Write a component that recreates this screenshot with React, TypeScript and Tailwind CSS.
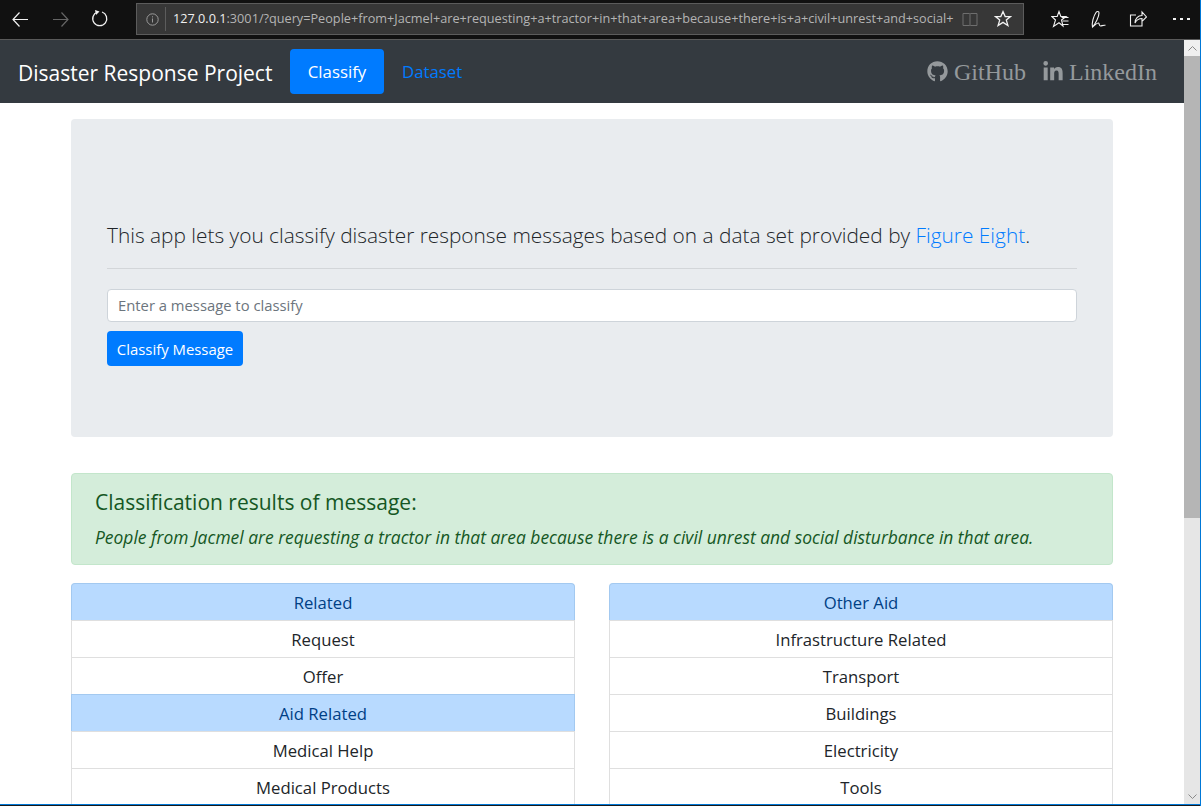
import React from "react";
import { FaGithub, FaLinkedinIn } from "react-icons/fa";

const sans = "font-['Open_Sans','Noto_Sans',sans-serif]";

function Toolbar() {
  return (
    <div className="flex h-[40px] shrink-0 items-center border-b border-[#5a5a5a] bg-[#111111] pb-[1px]">
      <div className="flex h-full w-[136px] shrink-0 items-center">
        <svg width="120" height="24" viewBox="0 0 120 24" className="ml-[10px]" fill="none" strokeWidth="1.2">
          <path d="M3 12.500h15M9.500 5.500 3 12.500l6.500 7" stroke="#f2f2f2" />
          <path d="M43 12.500h15M51.500 5.500 58 12.500l-6.500 7" stroke="#666666" />
          <path d="M92 5a7 7 0 1 1-4.500 0" stroke="#f2f2f2" strokeWidth="1.300" />
          <path d="M85 3 89.500 4.500 86 8z" fill="#f2f2f2" />
        </svg>
      </div>
      <div className="flex h-[32px] w-[888px] shrink-0 items-center overflow-hidden border border-[#5c5c5c] bg-[#373737]">
        <svg width="15" height="15" viewBox="0 0 15 15" fill="none" className="ml-[8px] shrink-0">
          <circle cx="7.500" cy="7.500" r="5.700" stroke="#9a9a9a" />
          <path d="M7.500 6.500v4M7.500 4.300v1.100" stroke="#9a9a9a" />
        </svg>
        <div className="ml-[5px] h-[24px] w-px shrink-0 bg-[#5c5c5c]" />
        <div className={`${sans} ml-[7px] w-[784px] shrink-0 whitespace-nowrap text-[12.7px] text-[#b4b4b4]`}>
          <span className="text-[#f0f0f0]">127.0.0.1</span>:3001/?query=People+from+Jacmel+are+requesting+a+tractor+in+that+area+because+there+is+a+civil+unrest+and+social+
        </div>
        <svg width="16" height="15" viewBox="0 0 16 15" fill="none" className="ml-[5px] shrink-0">
          <path d="M1 1.500h6.500l.5.700.5-.700H15v12H8.500l-.5.500-.5-.500H1zM8 2.200V13.500" stroke="#6e6e6e" />
        </svg>
        <svg width="18" height="18" viewBox="0 0 18 18" fill="none" className="ml-[16px] shrink-0">
          <path d="m9 1.600 2.200 5h5.300l-4.200 3.500 1.600 5.500L9 12.400l-4.900 3.200 1.600-5.500L1.500 6.600h5.300z" stroke="#f2f2f2" strokeWidth="1.300" />
        </svg>
      </div>
      <div className="ml-[27px] flex items-center">
        <svg width="18" height="18" viewBox="0 0 18 18" fill="none">
          <path d="M8 1.500 9.800 6.500H15L10.500 10l1.500 6-4-3.200L2.500 16.500 4.500 10 .8 6.500h5.400z" stroke="#f2f2f2" strokeWidth="1.100" />
          <path d="M10.500 7.500h7M11.500 11h6M12 14.500h5.500" stroke="#f2f2f2" strokeWidth="1.100" />
        </svg>
        <svg width="18" height="20" viewBox="0 0 18 20" fill="none" className="ml-[21px]">
          <path d="M2.500 18c-1-3.500 1-11 3.500-14.500 1-1.400 3-1.300 3 .5C9 8 5.500 14.500 2.500 18zM2.500 18c2.500-2 4.500-4.500 6-4 1 .5.500 3 2 3s2.500-1.200 5-.7" stroke="#f2f2f2" strokeWidth="1.100" />
        </svg>
        <svg width="18" height="18" viewBox="0 0 18 18" fill="none" className="ml-[21px]">
          <path d="M7 5H1.500v11H13v-4M6 13c0-4.500 3-7.500 7-7.500V2l4.500 5-4.500 4.500V8.500c-3 0-5.500 1.500-7 4.500z" stroke="#f2f2f2" strokeWidth="1.100" />
        </svg>
        <div className="ml-[26px] flex gap-[4px]">
          <span className="h-[2px] w-[3px] bg-[#f2f2f2]" />
          <span className="h-[2px] w-[3px] bg-[#f2f2f2]" />
          <span className="h-[2px] w-[3px] bg-[#f2f2f2]" />
        </div>
      </div>
    </div>
  );
}

function Navbar() {
  return (
    <nav className="flex h-[63px] shrink-0 items-center bg-[#343a40] pl-[18px] pr-[27px]">
      <span className="w-[272px] shrink-0 pt-[4px] text-[21px] text-white">Disaster Response Project</span>
      <a className="flex h-[45px] w-[94px] items-center justify-center rounded-[4px] bg-[#007bff] text-[16.8px] text-white">Classify</a>
      <a className="ml-[18px] pt-[1px] text-[16.800px] text-[#007bff]">Dataset</a>
      <div className="ml-auto flex items-center font-['Liberation_Serif',serif] text-[24px] text-[#95999c]">
        <FaGithub className="mr-[6px] h-[21px] w-[21px]" />
        <span>GitHub</span>
        <FaLinkedinIn className="ml-[16px] mr-[5px] h-[22px] w-[22px]" />
        <span>LinkedIn</span>
      </div>
    </nav>
  );
}

function Hero() {
  return (
    <section className="flex h-[318px] flex-col rounded-[4px] bg-[#e9ecef] px-[36px] pt-[101px]">
      <p className="text-[20.85px] leading-[31px] font-light text-[#212529]">
        This app lets you classify disaster response messages based on a data set provided by <a className="text-[#007bff]">Figure Eight</a>.
      </p>
      <hr className="mt-[17px] border-[#d3d6d9]" />
      <div className="mt-[20px] flex h-[33px] items-center rounded-[4px] border border-[#ced4da] bg-white px-[10px] text-[14.8px] text-[#6c757d]">
        Enter a message to classify
      </div>
      <button className="mt-[9px] flex h-[35px] w-[136px] items-center justify-center rounded-[4px] bg-[#007bff] pt-[1px] text-[14.9px] text-white">Classify Message</button>
    </section>
  );
}

function Group({ items }: { items: [string, boolean][] }) {
  return (
    <div className="flex h-[300px] flex-col">
      {items.map(([label, head], i) => (
        <div
          key={label}
          className={`flex h-[37px] shrink-0 items-center justify-center border-x border-t pt-[1px] text-[16.7px] ${
            head ? "border-[#a3c9f0] bg-[#b8daff] text-[#004085]" : "border-[#dfdfdf] bg-white text-[#212529]"
          } ${i === 0 ? "rounded-t-[4px]" : ""}`}
        >
          {label}
        </div>
      ))}
    </div>
  );
}

export default function App() {
  return (
    <div className={`${sans} flex h-[806px] w-[1201px] flex-col overflow-hidden border-r border-[#0078d7] bg-white`}>
      <Toolbar />
      <div className="flex min-h-0 flex-1">
        <div className="flex min-w-0 flex-1 flex-col">
          <Navbar />
          <main className="flex flex-col px-[71px] pt-[16px]">
            <Hero />
            <section className="mt-[36px] flex h-[92px] flex-col rounded-[4px] border border-[#c3e6cb] bg-[#d4edda] px-[23px] pt-[13px] text-[#155724]">
              <h4 className="text-[21px] leading-[30px]">Classification results of message:</h4>
              <p className="mt-[8px] whitespace-nowrap text-[17.45px] italic leading-[24px]">
                People from Jacmel are requesting a tractor in that area because there is a civil unrest and social disturbance in that area.
              </p>
            </section>
            <div className="mt-[18px] grid grid-cols-2 gap-x-[34px]">
              <Group items={[["Related", true], ["Request", false], ["Offer", false], ["Aid Related", true], ["Medical Help", false], ["Medical Products", false]]} />
              <Group items={[["Other Aid", true], ["Infrastructure Related", false], ["Transport", false], ["Buildings", false], ["Electricity", false], ["Tools", false]]} />
            </div>
          </main>
        </div>
        <aside className="flex w-[16px] shrink-0 flex-col bg-[#e6e6e6]">
          <div className="flex h-[16px] items-center justify-center bg-[#f0f0f0]">
            <svg width="9" height="5" viewBox="0 0 9 5" fill="none"><path d="m.5 4.500 4-4 4 4" stroke="#8a8a8a" /></svg>
          </div>
          <div className="h-[462px] bg-[#b5b5b5]" />
          <div className="mt-auto flex h-[16px] items-center justify-center">
            <svg width="9" height="5" viewBox="0 0 9 5" fill="none"><path d="m.5.500 4 4 4-4" stroke="#8a8a8a" /></svg>
          </div>
        </aside>
      </div>
      <div className="h-[1px] shrink-0 bg-[#0078d7]" />
      <div className="h-[1px] shrink-0 bg-[#1a1a1a]" />
    </div>
  );
}
